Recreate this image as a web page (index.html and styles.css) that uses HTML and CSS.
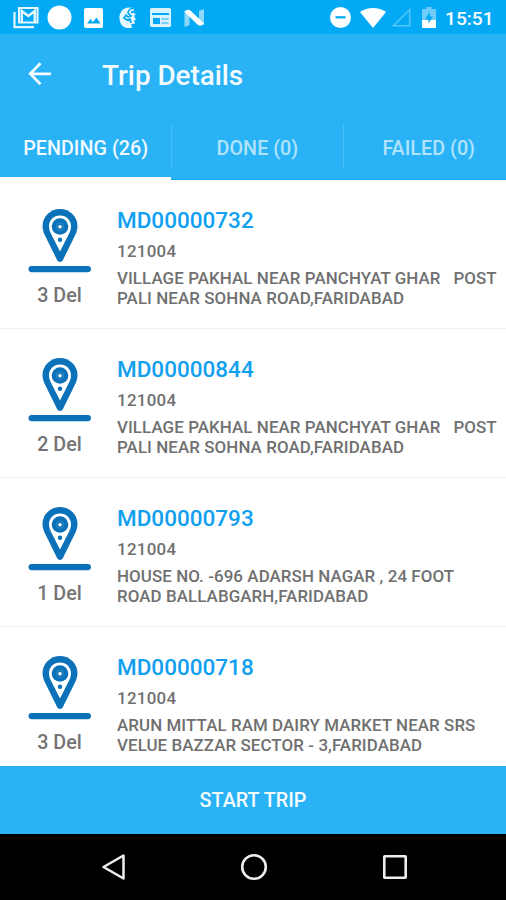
FILE: index.html
```html
<!DOCTYPE html>
<html lang="en">
<head>
<meta charset="utf-8">
<title>Trip Details</title>
<link rel="stylesheet" href="styles.css">
</head>
<body>
<svg class="defs" width="0" height="0" aria-hidden="true">
  <symbol id="pin" viewBox="0 0 64 64">
    <path fill="#0b72b9" d="M32 0C22.300 0 14.500 7.600 14.500 17c0 3.500 1 6.300 2.500 9.500l12.200 24.800c1.200 2.300 4.400 2.300 5.600 0L47 26.500c1.500-3.200 2.500-6 2.500-9.500C49.500 7.600 41.700 0 32 0z"/>
    <path fill="#fff" d="M32 6.500c-6.300 0-11 4.700-11 10.700 0 2.700.7 4.800 1.900 7.300L32 42.500l9.100-18c1.200-2.500 1.900-4.600 1.900-7.300 0-6-4.700-10.700-11-10.700z"/>
    <circle cx="32" cy="17.500" r="8.300" fill="#0b72b9"/>
    <circle cx="32" cy="17.700" r="3.800" fill="none" stroke="#3c91cb" stroke-width=".7"/>
    <circle cx="32" cy="17.700" r="1.800" fill="#fff"/>
    <circle cx="32" cy="30.800" r="2.200" fill="#0b72b9"/>
    <rect x=".5" y="57" width="62.500" height="6.200" rx="3.100" fill="#0b72b9"/>
  </symbol>
</svg>
<div class="screen">
  <header class="status">
    <div class="notifications">
      <svg width="26" height="22" viewBox="0 0 26 22"><path d="M1.500 5v15.200H21" fill="none" stroke="#e5f6ff" stroke-width="2.200"/><path d="M6 1h18.500v14.500H6z" fill="none" stroke="#e5f6ff" stroke-width="2"/><path d="M8.800 15V4l6.500 5 6.500-5v11" fill="none" stroke="#e5f6ff" stroke-width="2.500"/></svg>
      <svg width="25" height="25" viewBox="0 0 25 25"><circle cx="12.500" cy="12.500" r="12" fill="#fff"/></svg>
      <svg width="19" height="20" viewBox="0 0 19 20"><rect width="19" height="20" rx="2" fill="#fff"/><path d="M3 15.500l3.500-4.500 2.500 3 3.500-4.500 4 6z" fill="#03a9f4"/></svg>
      <svg width="18" height="22" viewBox="0 0 18 22"><path d="M15 1.500C10-.5 4 1 2 5c-1 2-2 4-1.500 7C1 17 4 20.500 8 21h5l-1-3.500 4-1-1-3 2-1-2-3.500 2-2-3-1z" fill="#e9f8ff"/><path d="M15 1c-4 .5-6 3-6 5l3 3-3 1-2-2-2 3 3 2 3-1 1 4" fill="none" stroke="#03a9f4" stroke-width="1.700"/><circle cx="13" cy="5" r="1.200" fill="#03a9f4"/></svg>
      <svg width="21" height="19" viewBox="0 0 21 19"><rect width="21" height="19" rx="1.500" fill="#d9f2ff"/><path d="M2 5h17v2H2zM3 10h7v6H3z" fill="#03a9f4"/><path d="M11.500 11h7M11.500 15h7" stroke="#55c4f8" stroke-width="1.500"/></svg>
      <svg width="21" height="18" viewBox="0 0 21 18"><path d="M.5 3l5 4v9l-5 2zM15 2l5-2v16l-5-2z" fill="#8ed8fb"/><path d="M.5 2.500C3 .5 5 .3 7 2l13 12.500c-2.500 2.500-4.500 2.800-6.500 1L.5 3z" fill="#fff"/></svg>
    </div>
    <div class="indicators">
      <svg width="21" height="21" viewBox="0 0 21 21"><circle cx="10.500" cy="10.500" r="10.500" fill="#fff"/><path d="M5.500 10.300h10" stroke="#03a9f4" stroke-width="2.300"/></svg>
      <svg width="26" height="20" viewBox="0 0 26 20"><path d="M0 4C7.500-1.300 18.500-1.300 26 4L13 20z" fill="#fff"/></svg>
      <svg width="20" height="19" viewBox="0 0 20 19"><path d="M2.300 17.800L18.700 1.800v16z" fill="none" stroke="#55c4f8" stroke-width="1.600"/></svg>
      <svg width="14" height="21" viewBox="0 0 14 21"><path d="M4.500 0h5v2H13q1 0 1 1v10H0V3q0-1 1-1h3.500z" fill="#70cdf9"/><path d="M0 13h14v7q0 1-1 1H1q-1 0-1-1z" fill="#fff"/><path d="M8 4.500l-5 8h3.500v4l4.500-7H8z" fill="#03a9f4"/></svg>
      <time>15:51</time>
    </div>
  </header>
  <div class="toolbar">
    <svg width="24" height="24" viewBox="0 0 24 24"><path d="M12.500 1.200L2.200 11.800l10.300 10.500M2.500 11.800H23" fill="none" stroke="#f4fbff" stroke-width="2.700"/></svg>
    <h1>Trip Details</h1>
  </div>
  <nav class="tabs">
    <div class="tab active"><span>PENDING (26)</span></div>
    <div class="tab"><span>DONE (0)</span></div>
    <div class="tab"><span>FAILED (0)</span></div>
  </nav>
  <main class="list">
    <article class="stop">
      <div class="marker"><svg width="64" height="64"><use href="#pin"/></svg><span>3 Del</span></div>
      <div class="info"><h2>MD00000732</h2><p class="code">121004</p><p class="address">VILLAGE PAKHAL NEAR PANCHYAT GHAR&nbsp;&nbsp; POST<br>PALI NEAR SOHNA ROAD,FARIDABAD</p></div>
    </article>
    <article class="stop">
      <div class="marker"><svg width="64" height="64"><use href="#pin"/></svg><span>2 Del</span></div>
      <div class="info"><h2>MD00000844</h2><p class="code">121004</p><p class="address">VILLAGE PAKHAL NEAR PANCHYAT GHAR&nbsp;&nbsp; POST<br>PALI NEAR SOHNA ROAD,FARIDABAD</p></div>
    </article>
    <article class="stop">
      <div class="marker"><svg width="64" height="64"><use href="#pin"/></svg><span>1 Del</span></div>
      <div class="info"><h2>MD00000793</h2><p class="code">121004</p><p class="address">HOUSE NO. -696 ADARSH NAGAR , 24 FOOT<br>ROAD BALLABGARH,FARIDABAD</p></div>
    </article>
    <article class="stop">
      <div class="marker"><svg width="64" height="64"><use href="#pin"/></svg><span>3 Del</span></div>
      <div class="info"><h2>MD00000718</h2><p class="code">121004</p><p class="address">ARUN MITTAL RAM DAIRY MARKET NEAR SRS<br>VELUE BAZZAR SECTOR - 3,FARIDABAD</p></div>
    </article>
  </main>
  <button class="start">START TRIP</button>
  <footer class="navbar">
    <svg width="26" height="28" viewBox="0 0 26 28"><path d="M3.500 14L23.500 2.500v23z" fill="none" stroke="#eee" stroke-width="2.500" stroke-linejoin="round"/></svg>
    <svg width="28" height="28" viewBox="0 0 28 28"><circle cx="14" cy="14" r="11.800" fill="none" stroke="#eee" stroke-width="2.600"/></svg>
    <svg width="26" height="26" viewBox="0 0 26 26"><rect x="2.300" y="2.300" width="21.400" height="21.400" rx=".5" fill="none" stroke="#eee" stroke-width="2.600"/></svg>
  </footer>
</div>
</body>
</html>
```
FILE: styles.css
```css
* { box-sizing: border-box; }
body { margin: 0; font-family: Roboto, "Liberation Sans", sans-serif; font-weight: 500; }
h1, h2, p { margin: 0; font-weight: 500; white-space: nowrap; }
svg { display: block; flex: none; }
.defs { position: absolute; }
.screen { width: 506px; height: 900px; display: flex; flex-direction: column; overflow: hidden; background: #fff; }
.status { flex: none; height: 34px; background: #03a9f4; display: flex; justify-content: space-between; align-items: center; padding: 1px 11px 0 13px; }
.notifications { display: flex; align-items: center; }
.notifications svg:nth-child(2) { margin-left: 8px; }
.notifications svg:nth-child(3) { margin-left: 12px; }
.notifications svg:nth-child(4) { margin-left: 16px; }
.notifications svg:nth-child(5) { margin-left: 13px; }
.notifications svg:nth-child(6) { margin-left: 13px; }
.indicators { display: flex; align-items: center; }
.indicators svg:nth-child(2) { margin-left: 9px; }
.indicators svg:nth-child(3) { margin-left: 5px; }
.indicators svg:nth-child(4) { margin-left: 11px; }
.indicators time { width: 50px; margin-left: 9px; padding-top: 2px; font-size: 19.2px; line-height: 22px; color: #f4fbff; }
.toolbar { flex: none; height: 81px; background: #29b3f6; display: flex; align-items: center; padding: 0 0 2px 28px; }
.toolbar h1 { margin-left: 50px; padding-top: 4px; font-size: 27.8px; line-height: 32px; color: #f4fbff; }
.tabs { flex: none; height: 65px; display: grid; grid-template: 65px / repeat(3, 171.3px); background: #29b3f6; overflow: hidden; }
.tab { padding: 9px 0 0; font-size: 19.7px; line-height: 48px; color: #b1e3fc; border-bottom: 1px solid #12a9f1; white-space: nowrap; letter-spacing: .05px; }
.tab span { display: block; text-align: center; height: 45px; line-height: 49px; }
.tab + .tab span { border-left: 1px solid #45bdf8; }
.tab.active { color: #f1faff; border-bottom: 3px solid #fff; }
.list { flex: 1; min-height: 0; overflow: hidden; }
.stop { height: 149.1px; display: flex; padding-top: 29px; border-bottom: 1px solid #f0f0f0; }
.marker { width: 64px; margin-left: 28px; text-align: center; color: #747474; font-size: 19.7px; line-height: 24px; }
.marker span { display: block; margin-top: 11px; padding-right: 1px; }
.info { margin-left: 25px; color: #707070; }
.info h2 { margin-top: -2px; font-size: 22.5px; line-height: 26px; letter-spacing: 0; color: #119ff0; }
.code { margin-top: 8px; font-size: 16.9px; line-height: 20px; letter-spacing: .3px; }
.address { margin-top: 8px; font-size: 16.9px; line-height: 19.7px; letter-spacing: .09px; }
.start { flex: none; height: 68px; margin: 0; border: 0; padding: 1px 0 0; background: #29b3f6; color: #f4fbff; font: 500 19.8px/24px Roboto, sans-serif; text-align: center; }
.navbar { flex: none; height: 66px; background: #000; display: flex; align-items: center; justify-content: space-between; padding: 0 98px 0 100px; }
```
